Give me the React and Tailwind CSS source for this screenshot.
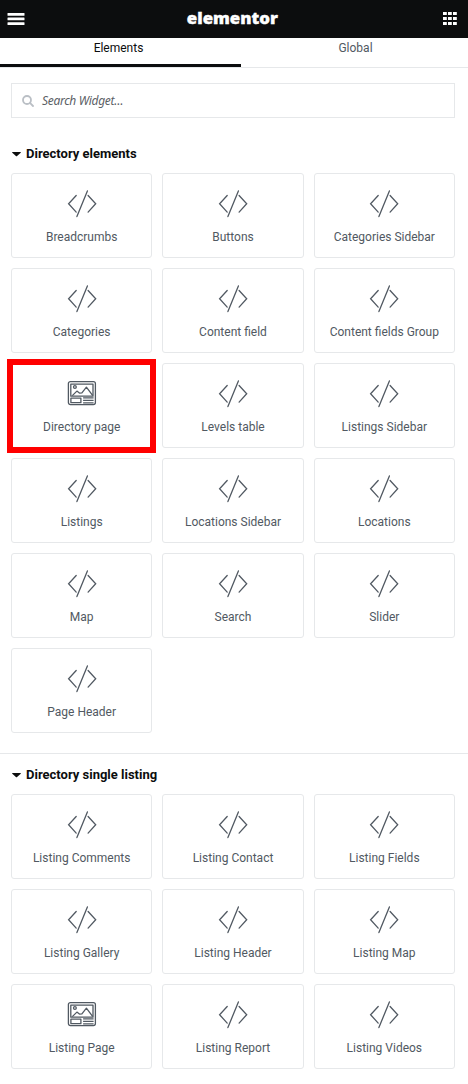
const directoryElements = [
  'Breadcrumbs', 'Buttons', 'Categories Sidebar',
  'Categories', 'Content field', 'Content fields Group',
  'Directory page', 'Levels table', 'Listings Sidebar',
  'Listings', 'Locations Sidebar', 'Locations',
  'Map', 'Search', 'Slider',
  'Page Header',
];

const singleListing = [
  'Listing Comments', 'Listing Contact', 'Listing Fields',
  'Listing Gallery', 'Listing Header', 'Listing Map',
  'Listing Page', 'Listing Report', 'Listing Videos',
];

const pageWidgets = ['Directory page', 'Listing Page'];

function CodeIcon() {
  return (
    <svg className="h-7 w-[30px]" viewBox="0 0 30 28" fill="none" stroke="#515962" strokeWidth="1.3" strokeLinecap="round">
      <path d="M9.2 5.5 1.6 13.7l7.6 8.4M21.1 5.5l7.6 8.2-7.6 8.4M20.4.9 9.9 26.6" />
    </svg>
  );
}

function PageIcon() {
  return (
    <svg className="h-7 w-[30px]" viewBox="0 0 30 28" fill="none" stroke="#515962" strokeWidth="1.3" strokeLinejoin="round">
      <rect x="1.4" y="1.6" width="27" height="23" rx="2" />
      <path d="M3.8 16.2V4.2h22.2v12z" />
      <circle cx="7.9" cy="7" r="1.4" />
      <path d="m5.3 15.6 4.6-4.5 2.5 2 2.5-.3 4.5-5.6 6.2 8.2" />
      <path d="M3.9 18.2h10v4.5h-10zM16.1 17.9h10.5M16.1 20.4h10.5M16.1 22.9h10.5" />
    </svg>
  );
}

function WidgetCard({ name, highlighted }) {
  return (
    <div className="relative flex h-[85px] flex-col items-center rounded-[3px] border border-[#e6e8ea] bg-white pt-4">
      {pageWidgets.includes(name) ? <PageIcon /> : <CodeIcon />}
      <div className="mt-[11px] whitespace-nowrap text-[12px] leading-4 text-[#515962]">{name}</div>
      {highlighted && <div className="absolute -top-[5px] -right-[5px] -bottom-[6px] -left-[5px] z-10 border-[6px] border-[#ff0000]" />}
    </div>
  );
}

function Section({ title, items, highlight }) {
  return (
    <section className="pr-[13px] pl-[11px]">
      <h2 className="flex h-10 items-center pt-0.5 text-[13px] font-bold text-[#0c0d0e]">
        <svg className="mr-[5px] ml-px h-[5px] w-[9px]" viewBox="0 0 9 5" fill="#0c0d0e">
          <path d="M.6 0h7.8q.8.1.3.7L5.1 4q-.6.4-1.2 0L.3.7Q-.2.1.6 0z" />
        </svg>
        {title}
      </h2>
      <div className="grid grid-cols-3 gap-2.5">
        {items.map((name) => (
          <WidgetCard key={name} name={name} highlighted={name === highlight} />
        ))}
      </div>
    </section>
  );
}

export default function App() {
  return (
    <div className="h-[1084px] w-[468px] overflow-hidden bg-white font-['Roboto',sans-serif]">
      <header className="flex h-[38px] items-center justify-between bg-[#0c0d0e] pr-[11px] pl-[7px] text-white">
        <svg className="-mt-px h-3 w-[18px]" viewBox="0 0 18 12" fill="currentColor">
          <rect x=".5" width="17" height="2.7" rx=".5" />
          <rect x=".5" y="4.6" width="17" height="2.7" rx=".5" />
          <rect x=".5" y="9.3" width="17" height="2.7" rx=".5" />
        </svg>
        <div className="-mt-[3px] mr-[3px] origin-center scale-x-[1.05] font-['Open_Sans',sans-serif] text-[16px] leading-none font-extrabold [-webkit-text-stroke:0.4px_white]">elementor</div>
        <svg className="-mt-px h-[13px] w-[14px]" viewBox="0 0 14 13" fill="currentColor">
          {[0, 5, 10].map((y) => [0, 5, 10].map((x) => (
            <rect key={`${x}-${y}`} x={x} y={y} width="3.8" height="3" />
          )))}
        </svg>
      </header>
      <nav className="flex h-[30px] border-b border-[#e6e8ea] text-[12px] leading-4">
        <div className="-mb-px h-[29px] w-[241px] border-b-[3px] border-[#0c0d0e] pt-0.5 pr-[4px] text-center text-[#0c0d0e]">Elements</div>
        <div className="flex-1 pt-0.5 pl-0.5 text-center text-[#515962]">Global</div>
      </nav>
      <div className="mt-[15px] mr-[13px] mb-[15px] ml-[11px] flex h-[35px] items-center border border-[#e6e8ea] pl-2.5">
        <svg className="mr-2 h-3 w-3" viewBox="0 0 12 12" fill="none" stroke="#babfc5" strokeWidth="1.8" strokeLinecap="round">
          <circle cx="5" cy="5" r="4" />
          <path d="m8.2 8.2 2.8 2.8" />
        </svg>
        <span className="pt-px font-['Noto_Sans',sans-serif] text-[12px] tracking-[-0.3px] text-[#5b6065] italic">Search Widget…</span>
      </div>
      <Section title="Directory elements" items={directoryElements} highlight="Directory page" />
      <div className="mt-5 border-t border-[#e6e8ea]">
        <Section title="Directory single listing" items={singleListing} />
      </div>
    </div>
  );
}
